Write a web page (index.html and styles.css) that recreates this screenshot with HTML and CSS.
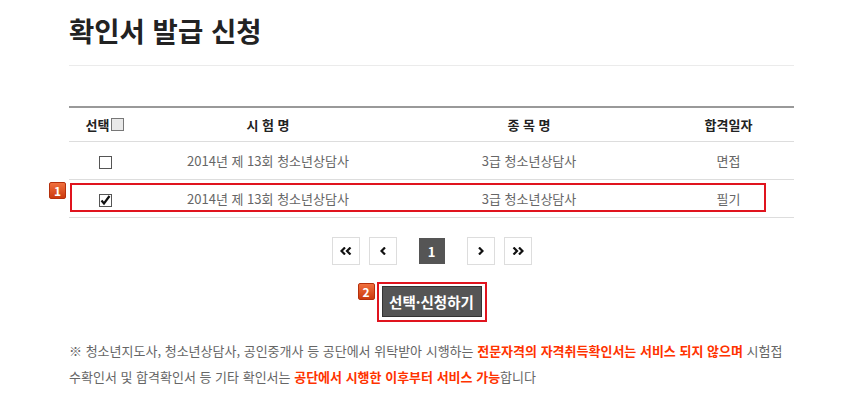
FILE: index.html
```html
<!DOCTYPE html>
<html lang="ko">
  <head>
    <meta charset="utf-8">
    <title>확인서 발급 신청</title>
    <link rel="stylesheet" href="styles.css">
  </head>
  <body>
    <div class="page">
      <div class="head">
        <h2 class="title">확인서 발급 신청</h2>
      </div>

      <div class="list">
        <table class="tbl">
          <colgroup>
            <col class="c-sel"><col class="c-exam"><col class="c-item"><col class="c-date">
          </colgroup>
          <thead>
            <tr>
              <th><span class="sel-head">선택<span class="chk chk-all"></span></span></th>
              <th>시 험 명</th>
              <th>종 목 명</th>
              <th>합격일자</th>
            </tr>
          </thead>
          <tbody>
            <tr>
              <td><span class="chk"></span></td>
              <td>2014년 제 13회 청소년상담사</td>
              <td>3급 청소년상담사</td>
              <td>면접</td>
            </tr>
            <tr>
              <td>
                <span class="chk">
                  <svg width="13" height="13" viewBox="0 0 13 13"><polyline points="2.5,6.5 5,9.5 10.5,2" fill="none" stroke="#111" stroke-width="2.2"/></svg>
                </span>
              </td>
              <td>2014년 제 13회 청소년상담사</td>
              <td>3급 청소년상담사</td>
              <td>필기</td>
            </tr>
          </tbody>
        </table>
        <span class="mark-row"></span>
        <span class="step step-1">1</span>
      </div>

      <div class="paging">
        <a class="pg" href="#"><svg width="12" height="8" viewBox="0 0 12 8"><polyline points="5,0.5 1.5,4 5,7.5" fill="none" stroke="#111" stroke-width="2.2"/><polyline points="10.5,0.5 7,4 10.5,7.5" fill="none" stroke="#111" stroke-width="2.2"/></svg></a>
        <a class="pg" href="#"><svg width="6" height="8" viewBox="0 0 6 8"><polyline points="5,0.5 1.5,4 5,7.5" fill="none" stroke="#111" stroke-width="2.2"/></svg></a>
        <span class="pg cur">1</span>
        <a class="pg" href="#"><svg width="6" height="8" viewBox="0 0 6 8"><polyline points="1,0.5 4.5,4 1,7.5" fill="none" stroke="#111" stroke-width="2.2"/></svg></a>
        <a class="pg" href="#"><svg width="12" height="8" viewBox="0 0 12 8"><polyline points="1.5,0.5 5,4 1.5,7.5" fill="none" stroke="#111" stroke-width="2.2"/><polyline points="7,0.5 10.5,4 7,7.5" fill="none" stroke="#111" stroke-width="2.2"/></svg></a>
      </div>

      <div class="submit">
        <span class="submit-frame">
          <span class="step step-2">2</span>
          <button class="btn" type="button">선택·신청하기</button>
        </span>
      </div>

      <p class="notice">※ 청소년지도사, 청소년상담사, 공인중개사 등 공단에서 위탁받아 시행하는 <strong>전문자격의 자격취득확인서는 서비스 되지 않으며</strong> 시험접<br>수확인서 및 합격확인서 등 기타 확인서는 <strong>공단에서 시행한 이후부터 서비스 가능</strong>합니다</p>
    </div>
  </body>
</html>
```

FILE: styles.css
```css
body { margin: 0; background: #fff; font-family: "Noto Sans CJK KR", "Malgun Gothic", sans-serif; color: #333; }

.page { width: 725px; padding-left: 69px; }

.head { padding-top: 12px; height: 53px; border-bottom: 1px solid #ebebeb; }
.title { margin: 0; font-size: 27.5px; line-height: 36px; font-weight: bold; color: #222; }

.list { position: relative; margin-top: 40px; }
.tbl { width: 100%; border-collapse: collapse; table-layout: fixed; border-top: 2px solid #999; font-size: 13px; }
.c-sel { width: 72px; }
.c-exam { width: 254px; }
.c-item { width: 268px; }
.c-date { width: 131px; }
.tbl th { height: 33px; padding: 0; font-weight: bold; color: #222; border-bottom: 1px solid #ddd; text-align: center; }
.tbl td { height: 37px; padding: 0; color: #666; border-bottom: 1px solid #ddd; text-align: center; }

.sel-head { display: inline-flex; align-items: center; gap: 2px; }
.chk { display: inline-block; width: 13px; height: 13px; box-sizing: border-box; border: 1px solid #555; background: #fff; vertical-align: middle; position: relative; }
.chk svg { position: absolute; left: -1px; top: -1px; }
.chk-all { border-color: #777; background: #e9e9e9; }

.mark-row { position: absolute; left: 1px; top: 77px; width: 696px; height: 29px; box-sizing: border-box; border: 2px solid #e0141e; }

.step { position: absolute; width: 17px; height: 17px; box-sizing: border-box; border: 1px solid #b5300c; border-radius: 2px; background: linear-gradient(#f0703e, #cc3a0e); color: #fff; font-size: 12px; font-weight: bold; line-height: 15px; text-align: center; }
.step-1 { left: -20px; top: 76px; }
.step-2 { left: -21px; top: -1px; }

.paging { display: flex; justify-content: center; align-items: center; gap: 9px; margin-top: 19px; }
.pg { display: flex; align-items: center; justify-content: center; width: 28px; height: 28px; box-sizing: border-box; border: 1px solid #ddd; background: #fff; }
.pg.cur { width: 26px; height: 26px; margin: 0 13px; border: 0; background: #555; color: #fff; font-size: 13px; font-weight: bold; }

.submit { display: flex; justify-content: center; margin-top: 17px; }
.submit-frame { position: relative; display: flex; padding: 2px 3px 3px; border: 2px solid #e0141e; }
.btn { width: 100px; height: 31px; padding: 0; border: 1px solid #333; background: #555; color: #fff; font-family: inherit; font-size: 14.5px; font-weight: bold; }

.notice { margin: 16px 0 0; font-size: 13px; line-height: 26px; color: #666; }
.notice strong { color: #ff3300; }
```
